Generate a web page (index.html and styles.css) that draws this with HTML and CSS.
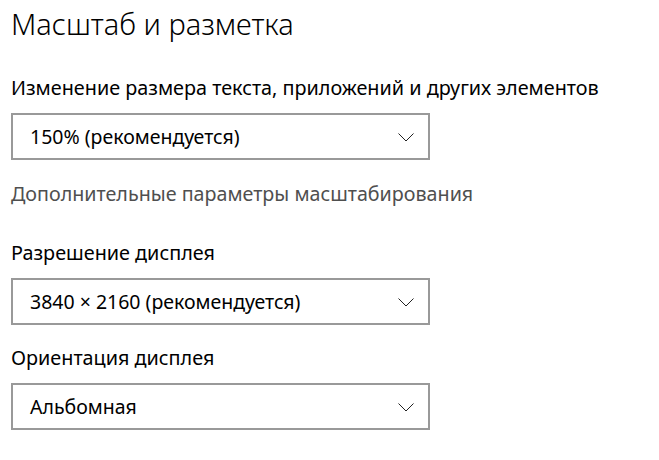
FILE: index.html
```html
<!DOCTYPE html>
<html lang="ru">
<head>
<meta charset="utf-8">
<link rel="stylesheet" href="styles.css">
</head>
<body>
<div class="page">
  <h1 class="title">Масштаб и разметка</h1>
  <div class="label first">Изменение размера текста, приложений и других элементов</div>
  <div class="select"><span class="value">150% (рекомендуется)</span>
    <svg class="chev" width="16" height="9" viewBox="0 0 16 9"><path d="M0.5 0.5 L8 8 L15.5 0.5" fill="none" stroke="#222" stroke-width="1"/></svg>
  </div>
  <div class="link">Дополнительные параметры масштабирования</div>
  <div class="label second">Разрешение дисплея</div>
  <div class="select"><span class="value">3840 × 2160 (рекомендуется)</span>
    <svg class="chev" width="16" height="9" viewBox="0 0 16 9"><path d="M0.5 0.5 L8 8 L15.5 0.5" fill="none" stroke="#222" stroke-width="1"/></svg>
  </div>
  <div class="label third">Ориентация дисплея</div>
  <div class="select"><span class="value">Альбомная</span>
    <svg class="chev" width="16" height="9" viewBox="0 0 16 9"><path d="M0.5 0.5 L8 8 L15.5 0.5" fill="none" stroke="#222" stroke-width="1"/></svg>
  </div>
</div>
</body>
</html>
```
FILE: styles.css
```css
html, body { margin: 0; padding: 0; background: #fff; }
body { font-family: "Noto Sans", "Open Sans", sans-serif; color: #000; }
.page { padding: 0 0 0 11px; width: 640px; }
.title { margin: 0; padding-top: 4px; font-size: 29px; font-weight: 300; line-height: 40px; }
.label { font-size: 19.8px; line-height: 28px; margin-bottom: 11px; }
.label.first { margin-top: 30px; }
.label.second { margin-top: 31px; }
.label.third { margin-top: 19px; }
.select { box-sizing: border-box; width: 419px; height: 47px; border: 2px solid #999; display: flex; align-items: center; justify-content: space-between; padding: 0 14px 0 17px; font-size: 19.5px; }
.chev { margin-top: 1px; }
.link { font-size: 19.7px; line-height: 28px; color: #4f4f4f; margin-top: 20px; }
```
